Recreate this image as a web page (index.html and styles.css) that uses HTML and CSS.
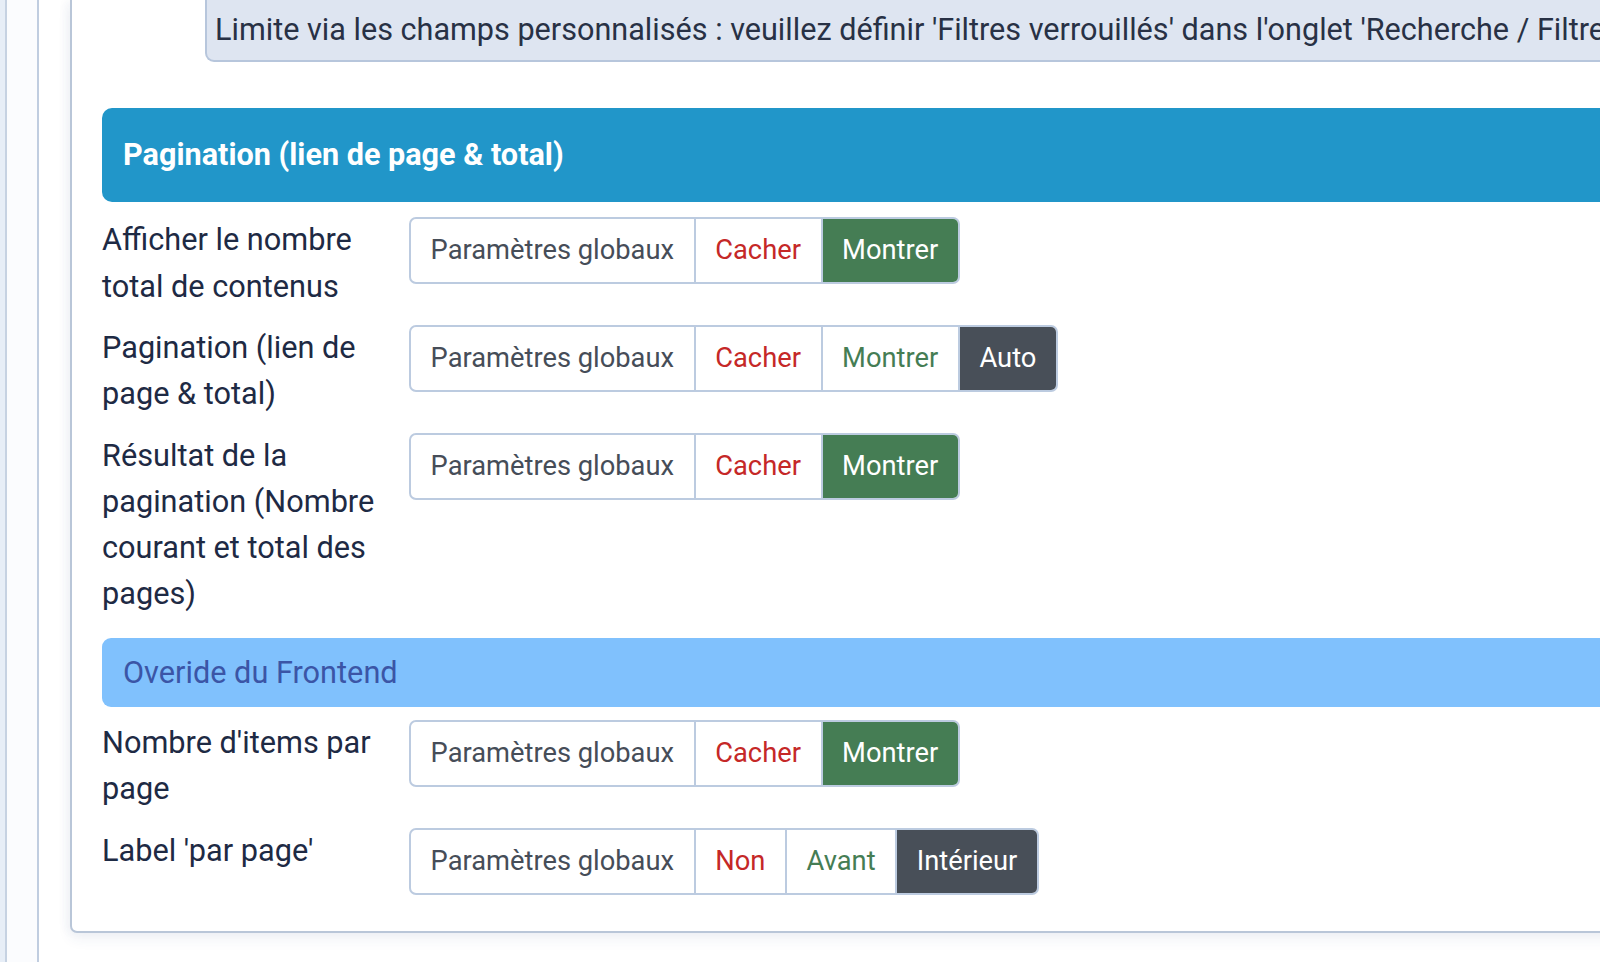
FILE: index.html
```html
<!DOCTYPE html>
<html lang="fr">
<head>
<meta charset="utf-8">
<title>Pagination</title>
<link rel="stylesheet" href="styles.css">
</head>
<body>
<div class="rail-outer">
  <div class="rail-inner">
    <div class="card">
      <div class="alert">Limite via les champs personnalisés : veuillez définir 'Filtres verrouillés' dans l'onglet 'Recherche / Filtres'</div>

      <div class="section-head">Pagination (lien de page &amp; total)</div>

      <div class="row">
        <div class="label">Afficher le nombre total de contenus</div>
        <div class="btn-group">
          <span class="seg seg-default">Paramètres globaux</span>
          <span class="seg seg-danger">Cacher</span>
          <span class="seg seg-success-on">Montrer</span>
        </div>
      </div>

      <div class="row">
        <div class="label">Pagination (lien de page &amp; total)</div>
        <div class="btn-group">
          <span class="seg seg-default">Paramètres globaux</span>
          <span class="seg seg-danger">Cacher</span>
          <span class="seg seg-success">Montrer</span>
          <span class="seg seg-dark-on">Auto</span>
        </div>
      </div>

      <div class="row">
        <div class="label">Résultat de la pagination (Nombre courant et total des pages)</div>
        <div class="btn-group">
          <span class="seg seg-default">Paramètres globaux</span>
          <span class="seg seg-danger">Cacher</span>
          <span class="seg seg-success-on">Montrer</span>
        </div>
      </div>

      <div class="sub-head">Overide du Frontend</div>

      <div class="row row-after-sub">
        <div class="label">Nombre d'items par page</div>
        <div class="btn-group">
          <span class="seg seg-default">Paramètres globaux</span>
          <span class="seg seg-danger">Cacher</span>
          <span class="seg seg-success-on">Montrer</span>
        </div>
      </div>

      <div class="row">
        <div class="label">Label 'par page'</div>
        <div class="btn-group">
          <span class="seg seg-default">Paramètres globaux</span>
          <span class="seg seg-danger">Non</span>
          <span class="seg seg-success">Avant</span>
          <span class="seg seg-dark-on">Intérieur</span>
        </div>
      </div>
    </div>
  </div>
</div>
</body>
</html>
```

FILE: styles.css
```css
html, body {
  margin: 0;
  padding: 0;
  height: 100%;
  overflow: hidden;
}

body {
  background: #e7eef7;
  font-family: Roboto, "Liberation Sans", Arial, sans-serif;
  color: #1e2a44;
  font-size: 30.7px;
}

.rail-outer {
  margin-left: 5px;
  border-left: 2px solid #c6d2e2;
  background: #fbfcfe;
  min-height: 100%;
  width: 1900px;
}

.rail-inner {
  margin-left: 30px;
  border-left: 2px solid #c0cde0;
  background: #ffffff;
  min-height: 962px;
  padding-left: 31px;
}

.card {
  border: 2px solid #b9c6d8;
  border-top: none;
  border-radius: 0 0 0 7px;
  background: #ffffff;
  padding: 0 30px 36px 30px;
  box-shadow: 0 6px 14px rgba(40, 70, 130, 0.07), -4px 0 10px rgba(40, 70, 130, 0.04);
}

.alert {
  margin-left: 103px;
  background: #dee5f1;
  border: 2px solid #b7c6dc;
  border-top: none;
  border-radius: 0 0 0 9px;
  color: #283145;
  font-size: 30.6px;
  line-height: 47.5px;
  padding: 6.4px 10px 5.8px 8px;
  white-space: nowrap;
}

.section-head {
  margin-top: 46px;
  background: #2196c9;
  color: #ffffff;
  font-weight: 700;
  font-size: 30.6px;
  line-height: 94.3px;
  padding: 0 21px;
  border-radius: 10px 0 0 10px;
  white-space: nowrap;
}

.row {
  display: flex;
  align-items: flex-start;
  margin-top: 15.5px;
}

.row-after-sub {
  margin-top: 12.7px;
}

.label {
  width: 295px;
  padding-right: 12px;
  flex: none;
  line-height: 46.08px;
  color: #1e2a44;
}

.btn-group {
  display: inline-flex;
  border: 2px solid #bccbe0;
  border-radius: 7px;
  overflow: hidden;
  background: #ffffff;
  font-size: 27.3px;
}

.seg {
  display: block;
  padding: 9.8px 19.6px;
  line-height: 43.2px;
  white-space: nowrap;
}

.seg + .seg {
  border-left: 2px solid #bccbe0;
}

.seg-default {
  color: #464d58;
}

.seg-danger {
  color: #c52827;
}

.seg-success {
  color: #457d54;
}

.seg-success-on {
  background: #457d54;
  color: #ffffff;
}

.seg-dark-on {
  background: #484f58;
  color: #ffffff;
}

.sub-head {
  margin-top: 20.7px;
  background: #80c1fd;
  color: #3b55a6;
  line-height: 43.2px;
  padding: 13.2px 21px;
  border-radius: 9px 0 0 9px;
  white-space: nowrap;
}
```
